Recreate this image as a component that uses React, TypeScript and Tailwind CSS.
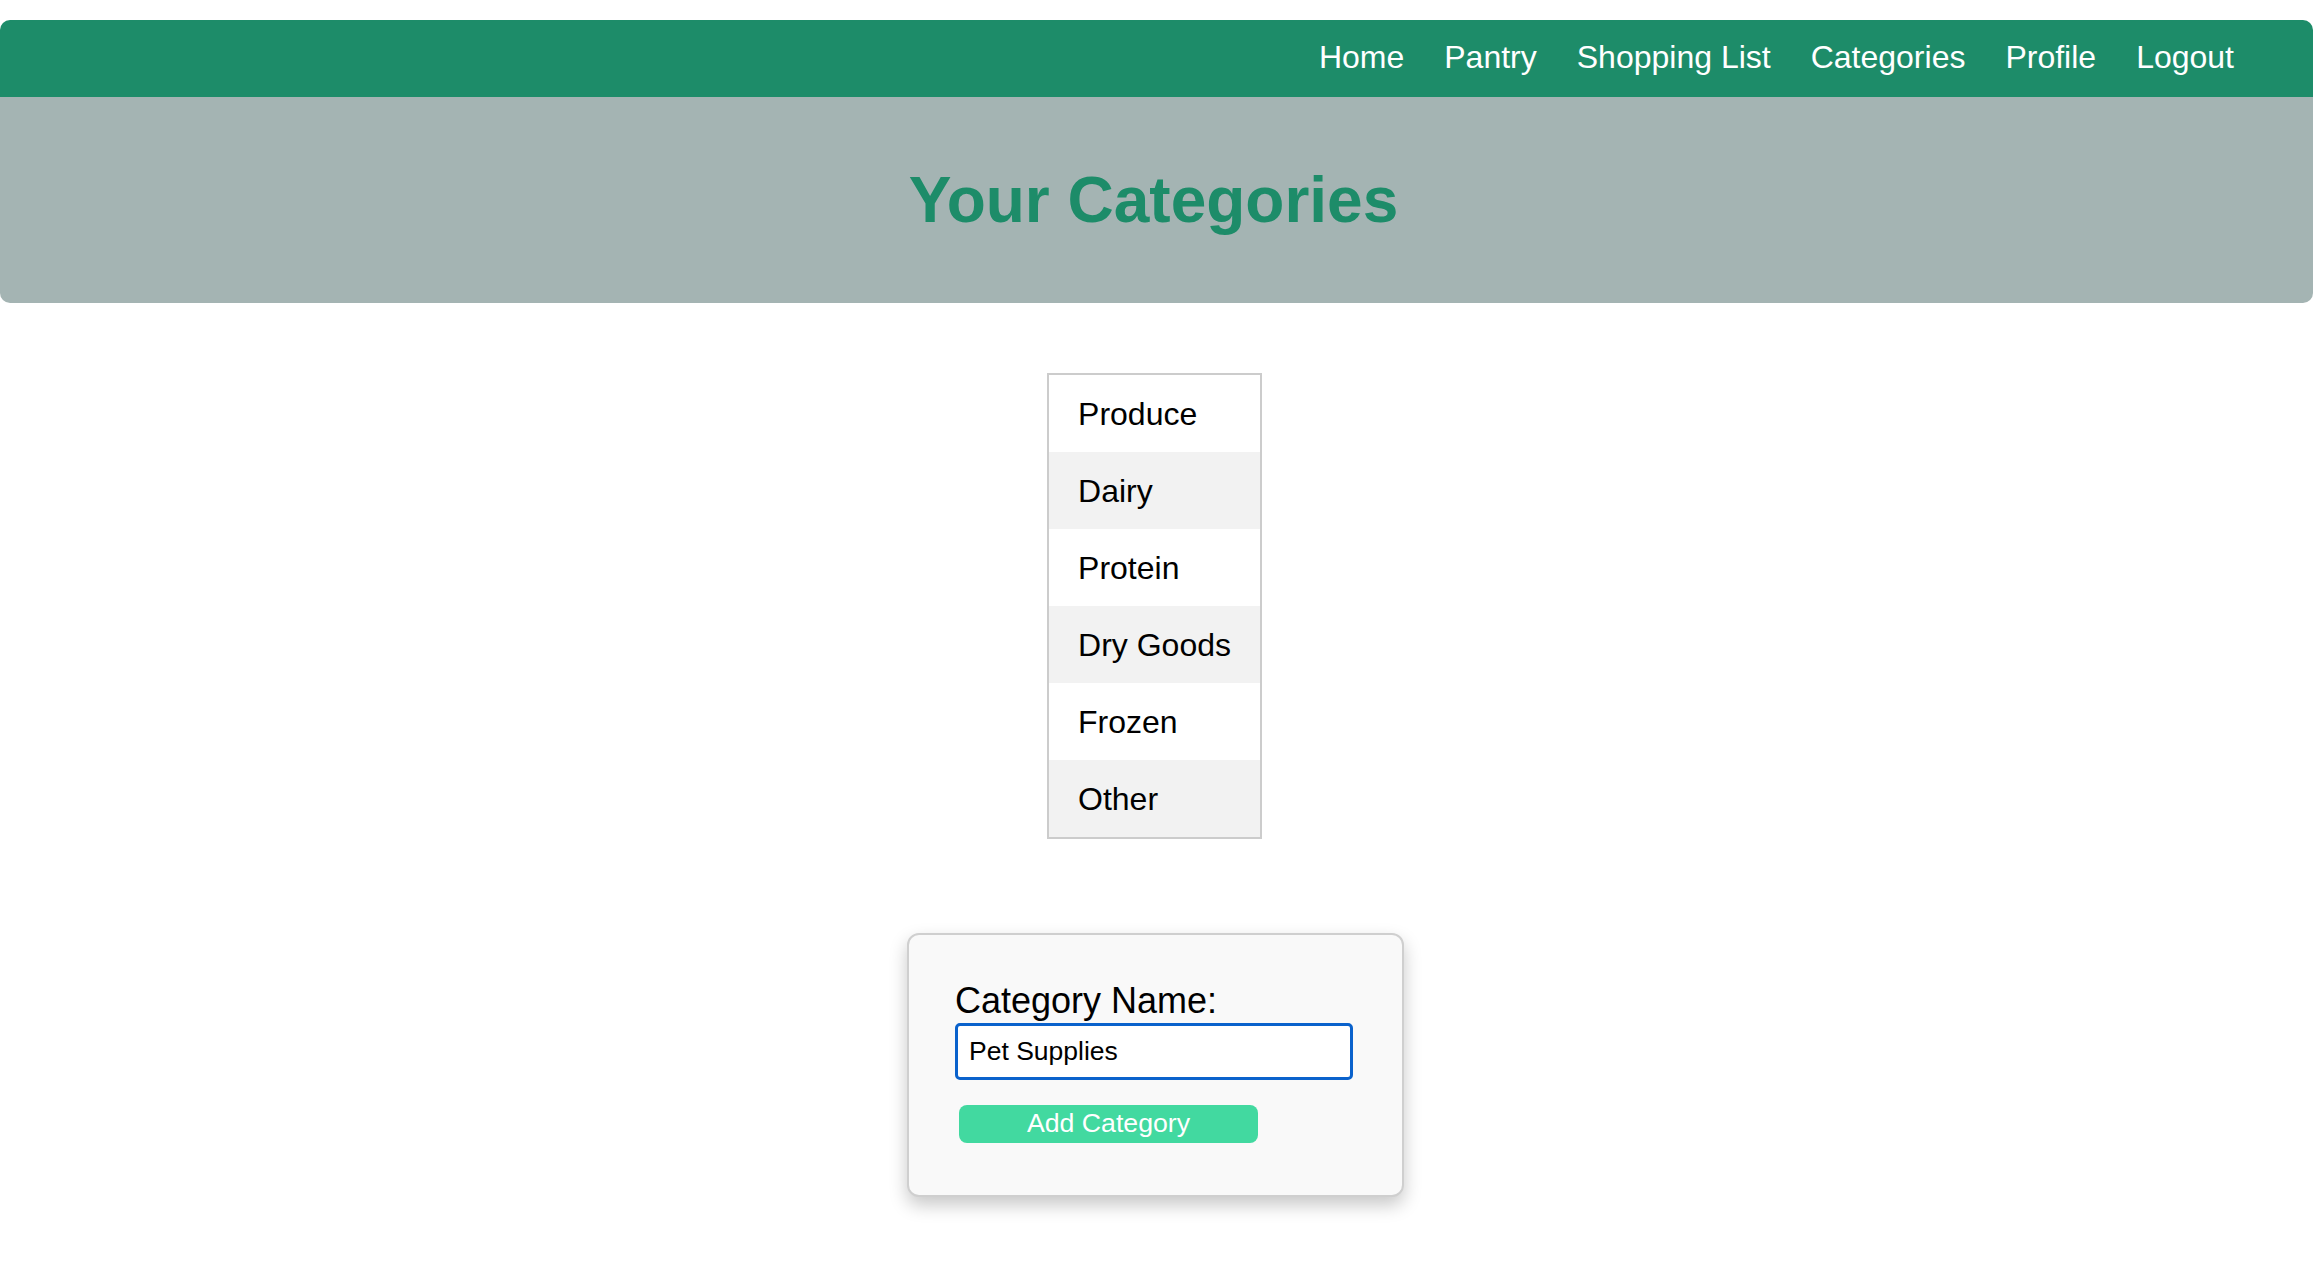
import React from "react";

const categories = ["Produce", "Dairy", "Protein", "Dry Goods", "Frozen", "Other"];
const links = ["Home", "Pantry", "Shopping List", "Categories", "Profile", "Logout"];

export default function App() {
  return (
    <div className="min-h-screen bg-white pt-[20px] pb-[60px]" style={{ fontFamily: '"Liberation Sans", Arial, sans-serif' }}>
      <header className="mr-[8px] rounded-[10px] overflow-hidden">
        <nav className="h-[77px] bg-[#1d8c69] flex items-center justify-end pr-[79px] gap-[40px]">
          {links.map((l) => (
            <a key={l} className="text-white text-[32px] leading-[37px] pb-[2px]">{l}</a>
          ))}
        </nav>
        <div className="h-[206px] bg-[#a4b4b3] flex items-center justify-center pr-[6px]">
          <h1 className="text-[64px] leading-[74px] font-bold text-[#1d8c69]">Your Categories</h1>
        </div>
      </header>

      <main className="flex flex-col items-center mr-[12px]">
        <ul className="mt-[70px] border-2 border-[#cccccc]">
          {categories.map((c, i) => (
            <li
              key={c}
              className={`h-[77px] flex items-center px-[29px] text-[32px] text-black ${i % 2 === 1 ? "bg-[#f2f2f2]" : "bg-white"}`}
            >
              {c}
            </li>
          ))}
        </ul>

        <form className="mt-[94px] ml-[2px] w-[497px] bg-[#f9f9f9] border-2 border-[#cfcfcf] rounded-[12px] shadow-[0_8px_18px_rgba(0,0,0,0.22)] pt-[45px] pb-[52px] pl-[46px] pr-[49px] flex flex-col">
          <label className="text-[36px] leading-[41px] text-black">Category Name:</label>
          <input
            defaultValue="Pet Supplies"
            className="mt-[2px] h-[57px] w-[398px] border-[3px] border-[#0a62cc] rounded-[5px] bg-white px-[11px] text-[26.5px] text-black outline-none"
          />
          <button
            type="button"
            className="mt-[25px] ml-[4px] h-[38px] w-[299px] rounded-[8px] bg-[#42d9a0] text-white text-[26.7px] leading-[30px] pb-[2px]"
          >
            Add Category
          </button>
        </form>
      </main>
    </div>
  );
}
